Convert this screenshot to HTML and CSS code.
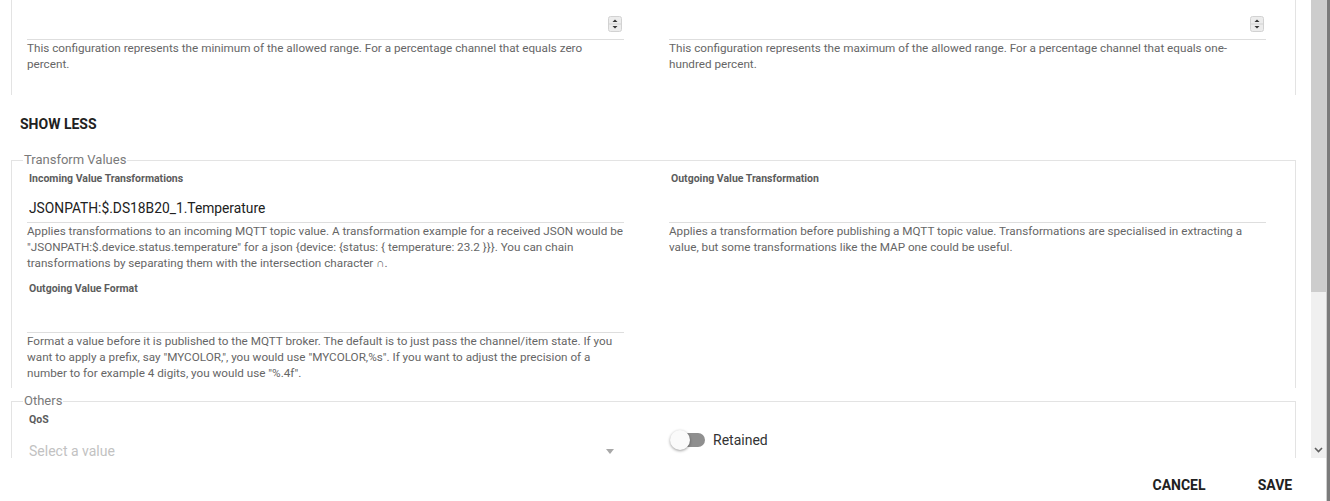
FILE: index.html
```html
<!DOCTYPE html>
<html lang="en">
<head>
  <meta charset="UTF-8" />
  <title>Channel configuration</title>
  <meta name="viewport" content="width=device-width, initial-scale=1" />
  <link rel="stylesheet" href="styles.css">
</head>
<body>

<div class="window">
  <div class="dialog">
    <div class="dialog-body">
      <div class="content">

        <fieldset class="group group-cut">
          <div class="grid">
            <div class="field">
              <div class="control">
                <input type="text" value="">
                <svg class="spinner" width="14" height="16" viewBox="0 0 14 16">
                  <rect x="0.5" y="0.5" width="13" height="15" rx="2" fill="#ececec" stroke="#d2d2d2"/>
                  <line x1="1" y1="8" x2="13" y2="8" stroke="#d2d2d2"/>
                  <path d="M4.5 6 L7 3.5 L9.5 6 Z" fill="#333"/>
                  <path d="M4.5 10 L7 12.5 L9.5 10 Z" fill="#333"/>
                </svg>
              </div>
              <p class="hint">This configuration represents the minimum of the allowed range. For a percentage channel that equals zero percent.</p>
            </div>
            <div class="field">
              <div class="control">
                <input type="text" value="">
                <svg class="spinner" width="14" height="16" viewBox="0 0 14 16">
                  <rect x="0.5" y="0.5" width="13" height="15" rx="2" fill="#ececec" stroke="#d2d2d2"/>
                  <line x1="1" y1="8" x2="13" y2="8" stroke="#d2d2d2"/>
                  <path d="M4.5 6 L7 3.5 L9.5 6 Z" fill="#333"/>
                  <path d="M4.5 10 L7 12.5 L9.5 10 Z" fill="#333"/>
                </svg>
              </div>
              <p class="hint">This configuration represents the maximum of the allowed range. For a percentage channel that equals one-hundred percent.</p>
            </div>
          </div>
        </fieldset>

        <button class="text-btn show-less">SHOW LESS</button>

        <fieldset class="group">
          <legend>Transform Values</legend>
          <div class="grid">
            <div class="col">
              <div class="field">
                <label>Incoming Value Transformations</label>
                <div class="control">
                  <input type="text" value="JSONPATH:$.DS18B20_1.Temperature">
                </div>
                <p class="hint">Applies transformations to an incoming MQTT topic value. A transformation example for a received JSON would be "JSONPATH:$.device.status.temperature" for a json {device: {status: { temperature: 23.2 }}}. You can chain transformations by separating them with the intersection character ∩.</p>
              </div>
              <div class="field">
                <label>Outgoing Value Format</label>
                <div class="control">
                  <input type="text" value="">
                </div>
                <p class="hint">Format a value before it is published to the MQTT broker. The default is to just pass the channel/item state. If you want to apply a prefix, say "MYCOLOR,", you would use "MYCOLOR,%s". If you want to adjust the precision of a number to for example 4 digits, you would use "%.4f".</p>
              </div>
            </div>
            <div class="col">
              <div class="field">
                <label>Outgoing Value Transformation</label>
                <div class="control">
                  <input type="text" value="">
                </div>
                <p class="hint">Applies a transformation before publishing a MQTT topic value. Transformations are specialised in extracting a value, but some transformations like the MAP one could be useful.</p>
              </div>
            </div>
          </div>
        </fieldset>

        <fieldset class="group group-others">
          <legend>Others</legend>
          <div class="grid">
            <div class="field">
              <label>QoS</label>
              <div class="control control-select">
                <span class="placeholder">Select a value</span>
                <span class="caret"></span>
              </div>
            </div>
            <div class="toggle-row">
              <span class="toggle"><span class="toggle-track"></span><span class="toggle-thumb"></span></span>
              <span class="toggle-label">Retained</span>
            </div>
          </div>
        </fieldset>

      </div>
      <div class="scrollbar">
        <div class="thumb"></div>
        <div class="track">
          <svg width="9" height="6" viewBox="0 0 9 6"><path d="M1 1 L4.5 4.5 L8 1" fill="none" stroke="#606060" stroke-width="1.6"/></svg>
        </div>
      </div>
    </div>
    <div class="actions">
      <button class="text-btn">CANCEL</button>
      <button class="text-btn">SAVE</button>
    </div>
  </div>
  <div class="edge"></div>
</div>

</body>
</html>
```

FILE: styles.css
```css
html, body {
  margin: 0;
  height: 100%;
  overflow: hidden;
}
body {
  font-family: Roboto, 'Liberation Sans', sans-serif;
  background: #fff;
  color: #212121;
}
.window {
  display: flex;
  height: 501px;
}
.dialog {
  width: 1326px;
  display: flex;
  flex-direction: column;
}
.dialog-body {
  height: 458px;
  display: flex;
}
.content {
  width: 1310px;
  overflow: hidden;
}
.scrollbar {
  width: 15px;
  margin-left: 1px;
  display: flex;
  flex-direction: column;
}
.thumb {
  height: 292px;
  background: #cdcdcd;
}
.track {
  flex: 1;
  background: #f0f0f0;
  display: flex;
  align-items: flex-end;
  justify-content: center;
  padding-bottom: 5px;
}
.edge {
  width: 3px;
  border-left: 1px solid #cfcfcf;
  background: #7b7b7b;
}

/* groups */
.group {
  margin: 0 14px 0 11px;
  padding: 3px 29px 7px 15px;
  border: 1px solid #e3e3e3;
  border-bottom: none;
  min-width: 0;
}
.group-cut {
  border-top: none;
  padding-top: 4px;
  padding-bottom: 23px;
}
.group-cut .hint {
  padding-right: 4px;
}
.group-others {
  margin-top: 5px;
  padding-bottom: 0;
}
legend {
  font-size: 13px;
  line-height: 16px;
  color: #7a7a7a;
  padding: 0 1px;
  margin-left: -4px;
}
.grid {
  display: grid;
  grid-template-columns: 1fr 1fr;
  column-gap: 45px;
}
.col .field + .field {
  margin-top: 10px;
}
label {
  display: block;
  font-size: 10.5px;
  font-weight: bold;
  line-height: 16px;
  color: #5c5c5c;
  padding-left: 2px;
}
.control {
  display: flex;
  align-items: flex-start;
  height: 35px;
  border-bottom: 1px solid #dedede;
}
.control input {
  flex: 1;
  min-width: 0;
  border: none;
  outline: none;
  background: transparent;
  font-family: inherit;
  font-size: 13.8px;
  line-height: 20px;
  height: 35px;
  padding: 11px 2px 4px 2px;
  box-sizing: border-box;
  color: #212121;
}
.spinner {
  margin: 12px 2px 0 0;
}
.hint {
  margin: 0;
  font-size: 11.7px;
  line-height: 16px;
  color: #666;
}
.control-select {
  padding: 15px 2px 0 2px;
  box-sizing: border-box;
  align-items: center;
  height: 36px;
}
.placeholder {
  flex: 1;
  font-size: 14px;
  line-height: 17px;
  align-self: flex-start;
  color: #c2c2c2;
}
.caret {
  width: 0;
  height: 0;
  border-left: 4px solid transparent;
  border-right: 4px solid transparent;
  border-top: 5px solid #a8a8a8;
  margin: 0 8px 0 0;
  align-self: flex-start;
  margin-top: 6px;
}

/* toggle */
.toggle-row {
  display: flex;
  align-items: center;
  height: 24px;
  margin-top: 16px;
}
.toggle {
  position: relative;
  width: 34px;
  height: 20px;
  margin-left: 2px;
}
.toggle-track {
  position: absolute;
  left: 0;
  top: 3px;
  width: 34px;
  height: 14px;
  border-radius: 7px;
  background: #8f8f8f;
}
.toggle-thumb {
  position: absolute;
  left: -1px;
  top: 0;
  width: 20px;
  height: 20px;
  border-radius: 50%;
  background: #fafafa;
  box-shadow: 0 1px 3px rgba(0,0,0,0.4);
}
.toggle-label {
  margin-left: 8px;
  font-size: 14px;
  color: #333;
}

/* buttons */
.text-btn {
  font-family: inherit;
  font-size: 14px;
  font-weight: bold;
  color: #212121;
  background: none;
  border: none;
  padding: 0 8px;
  height: 28px;
  cursor: pointer;
}
.show-less {
  display: block;
  margin: 15px 0 14px 12px;
}
.actions {
  flex: 1;
  display: flex;
  justify-content: flex-end;
  align-items: flex-start;
  gap: 8px;
  padding: 13px 7px 0 0;
  overflow: hidden;
}
.actions .text-btn {
  min-width: 88px;
}
```
